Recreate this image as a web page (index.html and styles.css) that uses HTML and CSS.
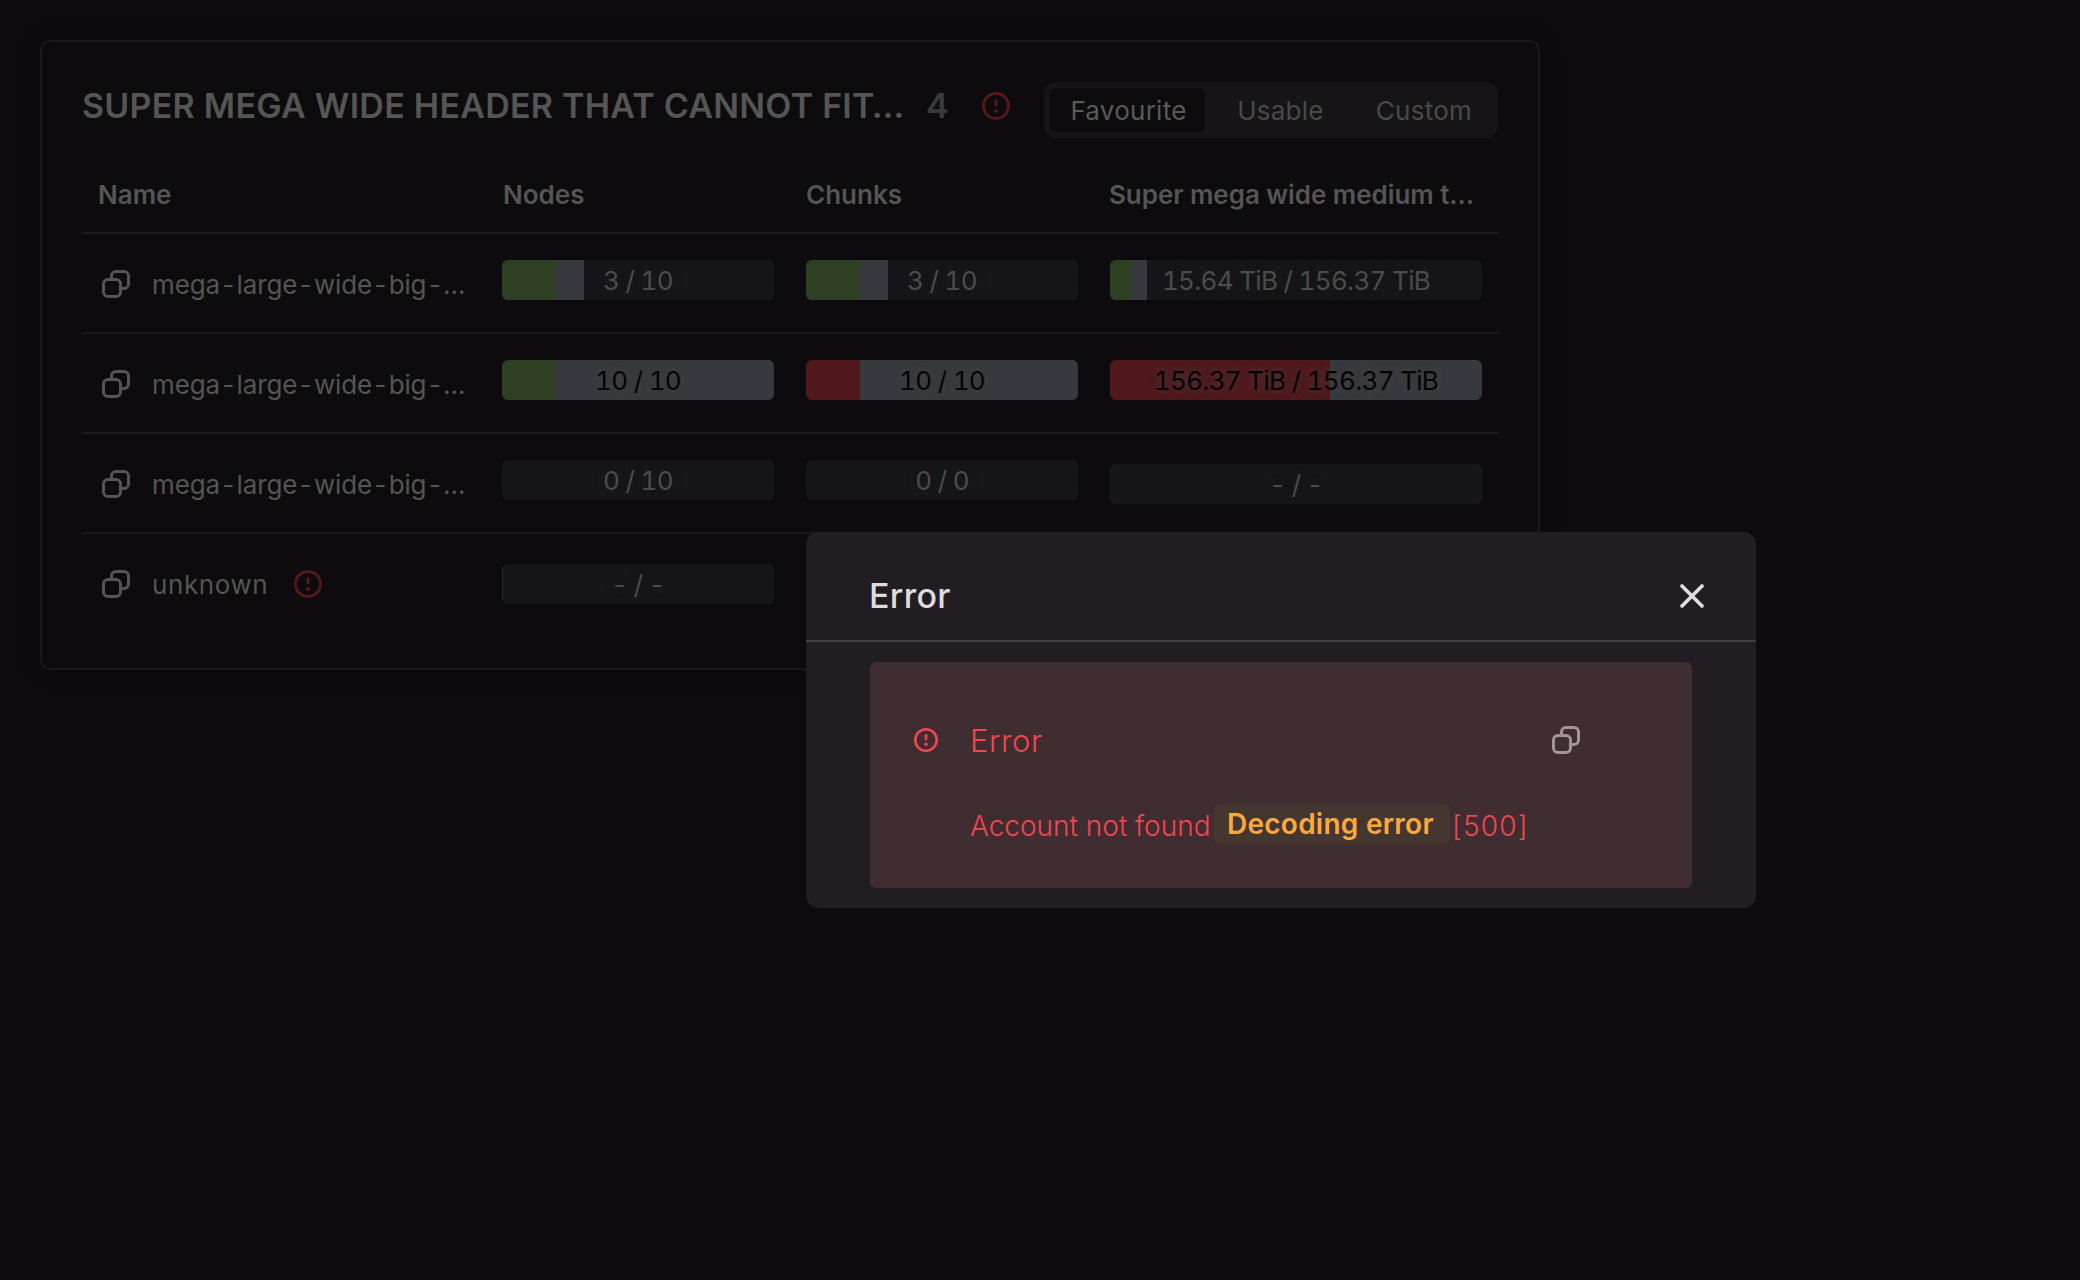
FILE: index.html
```html
<!DOCTYPE html>
<html lang="en">
<head>
<meta charset="utf-8">
<title>Accounts</title>
<link rel="stylesheet" href="styles.css">
</head>
<body>
<svg class="sprite" aria-hidden="true">
  <symbol id="copy" viewBox="0 0 28 28"><g fill="none" stroke="currentColor" stroke-width="3" stroke-linejoin="round"><rect x="1.5" y="9.5" width="17" height="17" rx="4.5"/><path d="M9.5 9.5V6A4.5 4.5 0 0 1 14 1.5H22A4.5 4.5 0 0 1 26.500 6V14A4.500 4.500 0 0 1 22 18.500H18.500"/></g></symbol>
  <symbol id="alert" viewBox="0 0 28 28"><g fill="none" stroke="currentColor" stroke-width="3"><circle cx="14" cy="14" r="12.5"/><path d="M14 8.500V13" stroke-linecap="round"/></g><circle cx="14" cy="19" r="2" fill="currentColor"/></symbol>
  <symbol id="close" viewBox="0 0 24 24"><path d="M2 2L22 22M22 2L2 22" fill="none" stroke="currentColor" stroke-width="3.600" stroke-linecap="round"/></symbol>
</svg>
<main class="card">
  <header class="head">
    <h1 class="title">SUPER MEGA WIDE HEADER THAT CANNOT FIT…</h1>
    <span class="count">4</span>
    <svg class="icon warn head-warn"><use href="#alert"/></svg>
    <nav class="tabs"><span class="tab active">Favourite</span><span class="tab usable">Usable</span><span class="tab custom">Custom</span></nav>
  </header>
  <section class="table">
    <div class="row labels"><span class="cell">Name</span><span class="cell nodes">Nodes</span><span class="cell">Chunks</span><span class="cell wide">Super mega wide medium t…</span></div>
    <div class="row">
      <div class="cell name"><svg class="icon"><use href="#copy"/></svg><span class="long">mega-large-wide-big-…</span></div>
      <div class="cell"><div class="bar"><i class="ok" style="width:20%"></i><i class="rest" style="width:10%"></i><span class="value">3 / 10</span></div></div>
      <div class="cell"><div class="bar"><i class="ok" style="width:20%"></i><i class="rest" style="width:10%"></i><span class="value">3 / 10</span></div></div>
      <div class="cell"><div class="bar"><i class="ok" style="width:5.6%"></i><i class="rest" style="width:4.3%"></i><span class="value">15.64 TiB / 156.37 TiB</span></div></div>
    </div>
    <div class="row">
      <div class="cell name"><svg class="icon"><use href="#copy"/></svg><span class="long">mega-large-wide-big-…</span></div>
      <div class="cell"><div class="bar full"><i class="ok" style="width:20%"></i><i class="rest" style="width:80%"></i><span class="value">10 / 10</span></div></div>
      <div class="cell"><div class="bar full"><i class="bad" style="width:20%"></i><i class="rest" style="width:80%"></i><span class="value">10 / 10</span></div></div>
      <div class="cell"><div class="bar full"><i class="bad" style="width:59.1%"></i><i class="rest" style="width:40.9%"></i><span class="value">156.37 TiB / 156.37 TiB</span></div></div>
    </div>
    <div class="row">
      <div class="cell name"><svg class="icon"><use href="#copy"/></svg><span class="long">mega-large-wide-big-…</span></div>
      <div class="cell"><div class="bar"><span class="value">0 / 10</span></div></div>
      <div class="cell"><div class="bar"><span class="value">0 / 0</span></div></div>
      <div class="cell empty"><div class="bar"><span class="value">- / -</span></div></div>
    </div>
    <div class="row last">
      <div class="cell name"><svg class="icon"><use href="#copy"/></svg><span class="unknown">unknown</span><svg class="icon warn"><use href="#alert"/></svg></div>
      <div class="cell empty"><div class="bar"><i class="rest sliver"></i><span class="value">- / -</span></div></div>
    </div>
  </section>
</main>
<section class="dialog" role="dialog">
  <header class="dialog-head"><h2 class="dialog-title">Error</h2><svg class="close"><use href="#close"/></svg></header>
  <div class="dialog-body">
    <div class="alert">
      <svg class="alert-icon"><use href="#alert"/></svg>
      <div class="alert-main">
        <div class="alert-top"><span class="alert-title">Error</span><svg class="icon alert-copy"><use href="#copy"/></svg></div>
        <div class="message"><span class="reason">Account not found</span><span class="badge">Decoding error</span><span class="code">[500]</span></div>
      </div>
    </div>
  </div>
</section>
</body>
</html>
```
FILE: styles.css
```css
* { box-sizing: border-box; }
body {
  margin: 0;
  padding: 40px;
  width: 2080px;
  height: 1280px;
  overflow: hidden;
  background: #0d0b0e;
  color: #555;
  font: 26px/36px Inter, "Liberation Sans", sans-serif;
}
h1, h2 { margin: 0; }
span { white-space: nowrap; }
.sprite { position: absolute; width: 0; height: 0; }
.icon { width: 28px; height: 28px; flex: none; }
.warn { color: #561719; }

.card {
  width: 1500px;
  height: 630px;
  padding: 40px;
  border: 2px solid #1a181b;
  border-radius: 10px;
  box-shadow: 0 0 20px rgba(0, 0, 0, .3);
}
.head { display: flex; height: 56px; }
.title { width: 844px; font-size: 34px; line-height: 48px; font-weight: 600; letter-spacing: .24px; white-space: nowrap; }
.count { width: 56px; font-size: 34px; line-height: 48px; font-weight: 600; color: #3b393b; }
.head-warn { margin-top: 10px; }
.tabs {
  display: flex;
  width: 454px;
  height: 56px;
  margin-left: auto;
  padding: 6px;
  border-radius: 12px;
  background: #161417;
  letter-spacing: .25px;
}
.tab { padding-left: 3px; line-height: 46px; text-align: center; color: #4a494a; }
.active { width: 156px; padding-left: 2px; border-radius: 6px; background: #0d0b0e; color: #5a5a5a; }
.usable { width: 149px; }
.custom { width: 140px; }

.row {
  display: grid;
  grid-template-columns: 404px 304px 304px 404px;
  height: 100px;
  border-bottom: 2px solid #1a191b;
}
.labels { height: 96px; font-weight: 600; line-height: 36px; padding-top: 39px; }
.last { border: 0; }
.cell { padding: 0 16px; }
.nodes { padding-left: 17px; }
.wide { padding-left: 15px; letter-spacing: -.05px; }
.row:not(.labels) .cell { padding-top: 26px; }
.row:not(.labels) .empty { padding-top: 30px; }
.row:not(.labels) .name { display: flex; padding-left: 20px; padding-top: 36px; }
.name span { margin-left: 22px; line-height: 30px; }
.long { letter-spacing: -.15px; font-variant-numeric: tabular-nums; }
.unknown { width: 142px; letter-spacing: .6px; }

.bar {
  position: relative;
  display: flex;
  height: 40px;
  overflow: hidden;
  border-radius: 6px;
  background: #16151a;
}
.ok { background: #2e3f23; }
.bad { background: #50181b; }
.rest { background: #36393e; }
.sliver { width: 1px; opacity: .6; }
.value {
  position: absolute;
  inset: 0;
  line-height: 42px;
  text-align: center;
  letter-spacing: -.68px;
  font-variant-numeric: tabular-nums;
  color: #4c4b4c;
  text-shadow: 0 0 8px #1a1a1a;
}
.full .value { color: #030203; text-shadow: 0 0 8px #444; }

.dialog {
  position: absolute;
  left: 806px;
  top: 532px;
  width: 950px;
  height: 376px;
  border-radius: 12px;
  background: #221d22;
  color: #dedcde;
}
.dialog-head {
  display: flex;
  align-items: center;
  justify-content: space-between;
  height: 110px;
  padding: 20px 52px 0 63px;
  border-bottom: 2px solid #423d42;
}
.dialog-title { font-size: 34px; line-height: 48px; font-weight: 500; letter-spacing: .3px; }
.close { width: 24px; height: 24px; }
.dialog-body { padding: 20px 64px; }
.alert {
  display: flex;
  height: 226px;
  padding: 60px 44px 0;
  border-radius: 6px;
  background: #3f2d32;
  color: #f5454f;
}
.alert-icon { width: 24px; height: 24px; margin-top: 6px; }
.alert-main { flex: 1; padding-left: 32px; }
.alert-top { display: flex; justify-content: space-between; height: 82px; }
.alert-title { font-size: 31px; line-height: 37px; font-weight: 300; letter-spacing: .5px; }
.alert-copy { margin: 4px 68px 0 0; color: #a19598; }
.message { display: flex; height: 40px; font-size: 28px; line-height: 44px; font-weight: 300; }
.reason { width: 244px; }
.badge {
  width: 236px;
  margin-right: 2px;
  padding-left: 13px;
  border-radius: 6px;
  background: #443732;
  color: #ffa83e;
  font-weight: 600;
  line-height: 40px;
  letter-spacing: .25px;
}
.code { letter-spacing: 1.2px; }
```
